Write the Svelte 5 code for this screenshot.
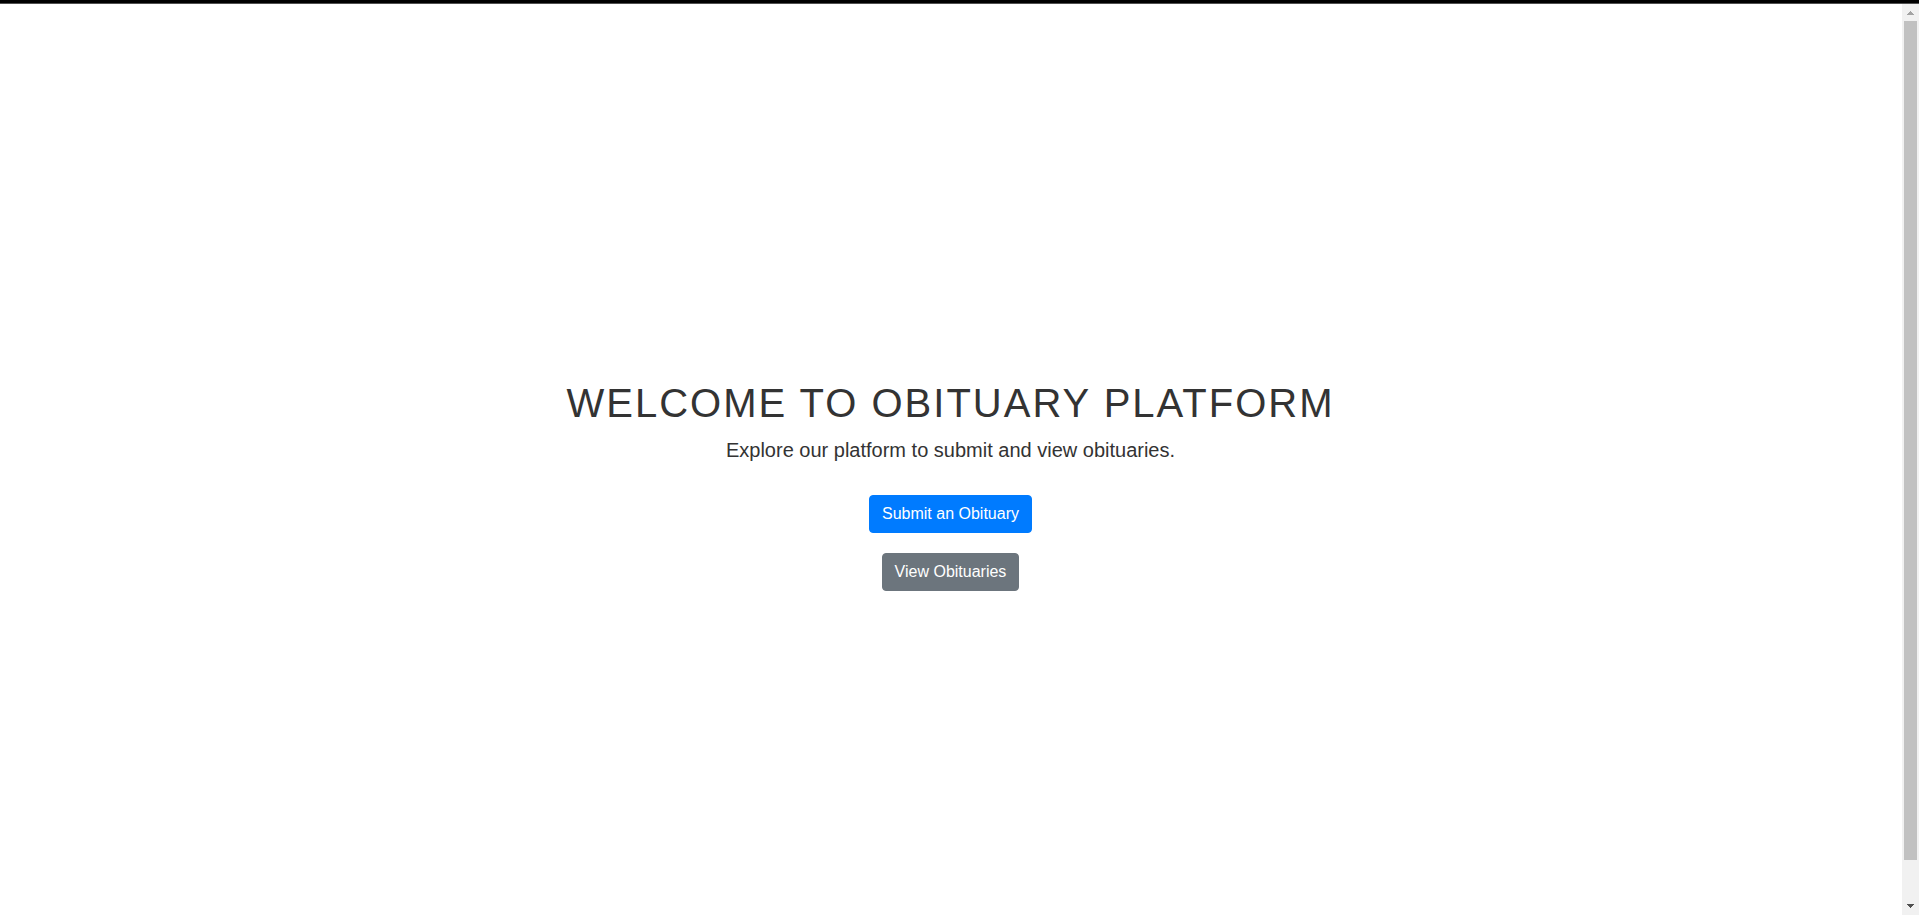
<script>
  const title = 'Welcome to Obituary Platform';
  const lead = 'Explore our platform to submit and view obituaries.';
</script>

<div class="window">
  <div class="topbar"></div>
  <div class="view">
    <main>
      <h1>{title}</h1>
      <p>{lead}</p>
      <nav>
        <a class="btn primary" href="#submit">Submit an Obituary</a>
        <a class="btn secondary" href="#view">View Obituaries</a>
      </nav>
    </main>
    <div class="scrollbar" aria-hidden="true">
      <svg width="17" height="17" viewBox="0 0 17 17" shape-rendering="crispEdges">
        <path fill="#a3a3a3" d="M8 7h1v1h1v1h1v1h1v1H5v-1h1V9h1V8h1z" />
      </svg>
      <div class="track"><div class="thumb"></div><div class="rest"></div></div>
      <svg width="17" height="17" viewBox="0 0 17 17" shape-rendering="crispEdges">
        <path fill="#505050" d="M5 6h7v1h-1v1h-1v1H9v1H8V9H7V8H6V7H5z" />
      </svg>
    </div>
  </div>
</div>

<style>
  :global(body) {
    margin: 0;
    background: #fff;
    color: #333;
    font: 16px/24px "Liberation Sans", Arial, sans-serif;
  }

  .window {
    display: flex;
    flex-direction: column;
    min-height: 100vh;
  }

  .topbar {
    height: 3px;
    background: #000;
    border-bottom: 1px solid #505050;
  }

  .view {
    display: flex;
    flex: 1;
  }

  main {
    box-sizing: border-box;
    display: flex;
    flex: 1;
    flex-direction: column;
    align-items: center;
    justify-content: center;
    padding: 50px 1px 0 0;
    text-align: center;
  }

  h1 {
    margin: 0 0 8px;
    font-size: 40px;
    font-weight: 400;
    line-height: 48px;
    letter-spacing: 2px;
    text-transform: uppercase;
  }

  p {
    margin: 0 0 30px;
    font-size: 20px;
    line-height: 30px;
  }

  nav {
    display: flex;
    flex-direction: column;
    align-items: center;
    gap: 20px;
  }

  .btn {
    padding: 6px 12px;
    border: 1px solid transparent;
    border-radius: 4px;
    color: #fff;
    text-decoration: none;
  }

  .primary {
    background: #007bff;
    border-color: #007bff;
  }

  .secondary {
    background: #6c757d;
    border-color: #6c757d;
  }

  .scrollbar {
    display: flex;
    flex-direction: column;
    width: 17px;
    background: #f1f1f1;
  }

  .scrollbar svg {
    display: block;
  }

  .track {
    display: flex;
    flex: 1;
    flex-direction: column;
    padding: 0 2px;
  }

  .thumb {
    flex: 22;
    background: #c1c1c1;
  }

  .rest {
    flex: 1;
  }
</style>
